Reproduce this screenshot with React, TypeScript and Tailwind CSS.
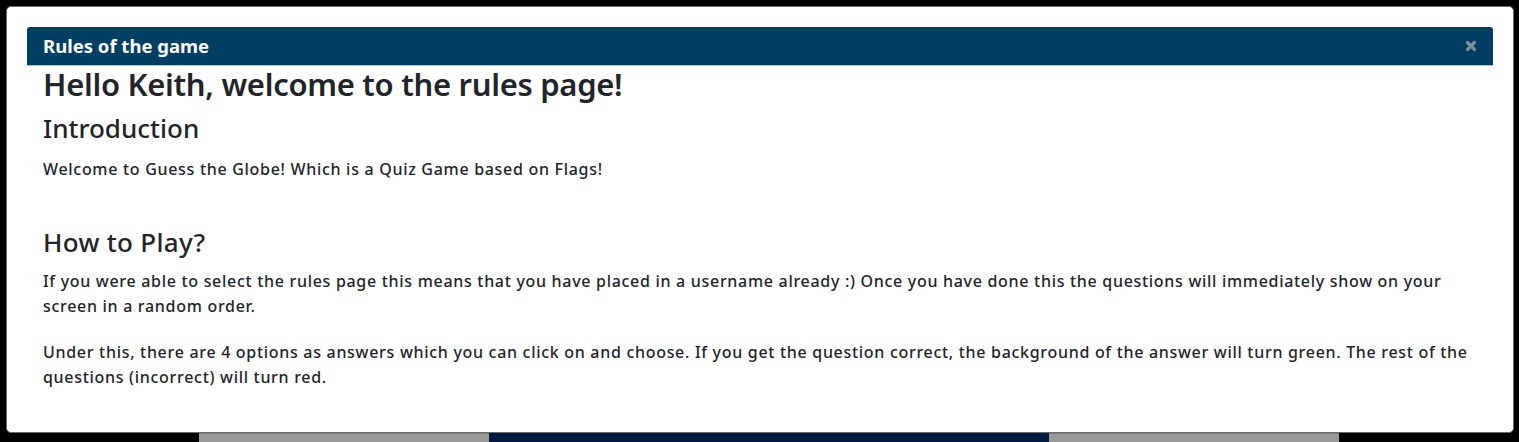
import React from "react";

export default function App() {
  return (
    <div className="w-[1519px] h-[442px] bg-black flex flex-col overflow-hidden" style={{ fontFamily: '"Noto Sans", "Open Sans", sans-serif' }}>
      <div className="ml-[6px] mt-[6px] w-[1508px] h-[427px] bg-white border border-[#6b6b6b] rounded-[5px] px-[20px] pt-[20px] text-[#212529]">
        <div className="h-[39px] bg-[#003f63] rounded-t-[3px] border-b border-[#a8c6de] flex items-center justify-between pl-[16px] pr-[16px]">
          <span className="text-white font-bold text-[18.5px] leading-none">Rules of the game</span>
          <svg width="12" height="12" viewBox="0 0 12 12">
            <path d="M2.5 2.5 L9.5 9.5 M9.5 2.5 L2.5 9.5" stroke="#7f909c" strokeWidth="3.2" strokeLinecap="round" />
          </svg>
        </div>
        <div className="px-[16px]">
          <h2 className="text-[31px] font-semibold leading-[1.2] mt-[0px] tracking-[-0.3px]">Hello Keith, welcome to the rules page!</h2>
          <h3 className="text-[26px] font-medium leading-[1.2] mt-[10px]">Introduction</h3>
          <p className="text-[16px] font-medium leading-[25px] mt-[13px] tracking-[0.7px]">Welcome to Guess the Globe! Which is a Quiz Game based on Flags!</p>
          <h3 className="text-[26px] font-medium leading-[1.2] mt-[45px] tracking-[0.3px]">How to Play?</h3>
          <p className="text-[16px] font-medium leading-[25px] mt-[10px] tracking-[0.7px]">If you were able to select the rules page this means that you have placed in a username already :) Once you have done this the questions will immediately show on your screen in a random order.</p>
          <p className="text-[16px] font-medium leading-[25px] mt-[21px] tracking-[0.7px]">Under this, there are 4 options as answers which you can click on and choose. If you get the question correct, the background of the answer will turn green. The rest of the questions (incorrect) will turn red.</p>
        </div>
      </div>
      <div className="flex h-[9px]">
        <div className="w-[199px] bg-black" />
        <div className="w-[290px] bg-[#999999] border-t border-[#7a7a7a]" />
        <div className="w-[560px] bg-[#001a40]" />
        <div className="w-[290px] bg-[#999999] border-t border-[#7a7a7a]" />
        <div className="flex-1 bg-black" />
      </div>
    </div>
  );
}
